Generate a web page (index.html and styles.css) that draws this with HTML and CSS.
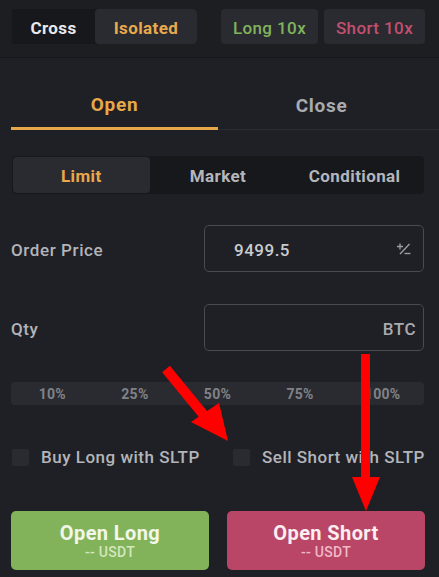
FILE: index.html
```html
<!DOCTYPE html>
<html>
<head>
<meta charset="utf-8">
<link rel="stylesheet" href="styles.css">
</head>
<body>
<div class="page">
  <div class="top">
    <div class="mode">
      <div class="mode-item cross">Cross</div>
      <div class="mode-item isolated">Isolated</div>
    </div>
    <div class="lev long">Long 10x</div>
    <div class="lev short">Short 10x</div>
  </div>

  <div class="tabs">
    <div class="tab active">Open</div>
    <div class="tab">Close</div>
  </div>

  <div class="seg">
    <div class="seg-item active">Limit</div>
    <div class="seg-item">Market</div>
    <div class="seg-item">Conditional</div>
  </div>

  <div class="field first">
    <div class="label">Order Price</div>
    <div class="input">
      <span class="value">9499.5</span>
      <svg class="pm" width="16" height="14" viewBox="0 0 16 14">
        <path d="M4 1.5v6M1 4.5h6" stroke="#9a9ca1" stroke-width="1.4" fill="none"/>
        <path d="M13.5 2L4 12" stroke="#9a9ca1" stroke-width="1.4" fill="none"/>
        <path d="M8.5 11.5h6" stroke="#9a9ca1" stroke-width="1.4" fill="none"/>
      </svg>
    </div>
  </div>

  <div class="field">
    <div class="label">Qty</div>
    <div class="input qty">
      <span class="unit">BTC</span>
    </div>
  </div>

  <div class="pct">
    <span>10%</span><span>25%</span><span>50%</span><span>75%</span><span>100%</span>
  </div>

  <div class="checks">
    <label class="check first-check"><span class="box"></span>Buy Long with SLTP</label>
    <label class="check"><span class="box"></span>Sell Short with SLTP</label>
  </div>

  <div class="actions">
    <div class="btn buy"><span class="btn-title">Open Long</span><span class="btn-sub">-- USDT</span></div>
    <div class="btn sell"><span class="btn-title">Open Short</span><span class="btn-sub">-- USDT</span></div>
  </div>

  <svg class="arrows" width="439" height="577" viewBox="0 0 439 577">
    <line x1="166" y1="369" x2="207" y2="419" stroke="#ff0000" stroke-width="10"/>
    <polygon points="191,422 219,403 228,441" fill="#ff0000"/>
    <rect x="361" y="354" width="9" height="125" fill="#ff0000"/>
    <polygon points="352,477 380,477 366,511" fill="#ff0000"/>
  </svg>
</div>
</body>
</html>
```

FILE: styles.css
```css
* { box-sizing: border-box; }
html, body { margin: 0; padding: 0; }
body {
  background: #1f2025;
  font-family: Roboto, "Noto Sans", sans-serif;
  color: #b4b6bb;
}
.page {
  position: relative;
  width: 439px;
  height: 577px;
  overflow: hidden;
}
.top {
  display: flex;
  align-items: flex-start;
  height: 58px;
  padding: 9px 12px 0 12px;
  background: #1d1e22;
  border-bottom: 1px solid #17181b;
}
.mode {
  display: flex;
  width: 185px;
  height: 35px;
  border-radius: 4px;
  overflow: hidden;
  background: #17181c;
}
.mode-item {
  display: flex;
  align-items: center;
  justify-content: center;
  font-size: 17px;
  font-weight: 700;
  letter-spacing: 0.4px;
  padding-top: 2px;
}
.cross { width: 83px; color: #e9e9ec; background: #17181c; }
.isolated { flex: 1; color: #e9a94c; background: #2a2b30; border-radius: 4px; }
.lev {
  display: flex;
  align-items: center;
  justify-content: center;
  height: 35px;
  border-radius: 4px;
  background: #2a2b30;
  font-size: 17px;
  font-weight: 500;
  letter-spacing: 0.4px;
  padding-top: 2px;
}
.long { width: 97px; margin-left: 24px; color: #80b35b; }
.short { width: 101px; margin-left: 6px; color: #c24f6f; }

.tabs {
  display: flex;
  margin-left: 11px;
  height: 72px;
  border-bottom: 1px solid #2b2c31;
}
.tab {
  width: 207px;
  display: flex;
  align-items: center;
  justify-content: center;
  padding-top: 24px;
  font-size: 19px;
  font-weight: 700;
  letter-spacing: 0.7px;
  color: #a9abb0;
}
.tab.active {
  color: #e8a84a;
  border-bottom: 3px solid #e8a84a;
  margin-bottom: -1px;
}

.seg {
  display: flex;
  margin: 26px 15px 0 12px;
  height: 38px;
  background: #17181c;
  border-radius: 4px;
  padding: 1px;
}
.seg-item {
  flex: 1;
  display: flex;
  align-items: center;
  justify-content: center;
  font-size: 17px;
  font-weight: 700;
  letter-spacing: 0.4px;
  color: #b4b6bb;
  border-radius: 4px;
  padding-top: 2px;
}
.seg-item.active { background: #2a2b30; color: #e8a84a; }

.field {
  display: flex;
  align-items: center;
  justify-content: space-between;
  margin: 32px 15px 0 11px;
}
.field.first { margin-top: 31px; }
.label {
  font-size: 17px;
  font-weight: 500;
  letter-spacing: 0.6px;
  color: #b2b4b9;
  padding-top: 2px;
}
.input {
  width: 220px;
  height: 47px;
  border: 1px solid #4a4b51;
  border-radius: 5px;
  display: flex;
  align-items: center;
  justify-content: space-between;
  padding: 2px 11px 0 29px;
}
.input.qty { padding-right: 7px; }
.value { font-size: 17px; font-weight: 500; letter-spacing: 0.5px; color: #c9cbcf; }
.unit { margin-left: auto; font-size: 17px; font-weight: 500; letter-spacing: 0.5px; color: #a9abb0; }
.pm { margin-top: -2px; }

.pct {
  display: flex;
  margin: 31px 15px 0 11px;
  height: 23px;
  background: #2a2b30;
  border-radius: 4px;
  align-items: center;
  font-size: 14px;
  font-weight: 700;
  letter-spacing: 0.3px;
  color: #808287;
}
.pct span { flex: 1; text-align: center; padding-top: 1px; }

.checks {
  display: flex;
  margin: 42px 0 0 12px;
  align-items: center;
}
.check {
  display: flex;
  align-items: center;
  font-size: 17px;
  font-weight: 500;
  letter-spacing: 0.5px;
  color: #b3b5ba;
}
.first-check { width: 221px; }
.box {
  width: 17px;
  height: 17px;
  border-radius: 2px;
  background: #2a2b30;
  margin-right: 12px;
}

.actions {
  display: flex;
  gap: 18px;
  margin: 44px 14px 0 11px;
}
.btn {
  flex: 1;
  height: 59px;
  border-radius: 5px;
  display: flex;
  flex-direction: column;
  align-items: center;
  justify-content: center;
}
.btn-title { font-size: 20px; font-weight: 700; line-height: 23px; letter-spacing: 0.4px; }
.btn-sub { font-size: 14px; font-weight: 500; line-height: 15px; letter-spacing: 0.3px; }
.buy { background: #82b25a; }
.buy .btn-title { color: #f2f7ea; }
.buy .btn-sub { color: #d3e8bf; }
.sell { background: #b94666; }
.sell .btn-title { color: #fbeef1; }
.sell .btn-sub { color: #f1b8c7; }

.arrows {
  position: absolute;
  left: 0;
  top: 0;
  pointer-events: none;
}
```
